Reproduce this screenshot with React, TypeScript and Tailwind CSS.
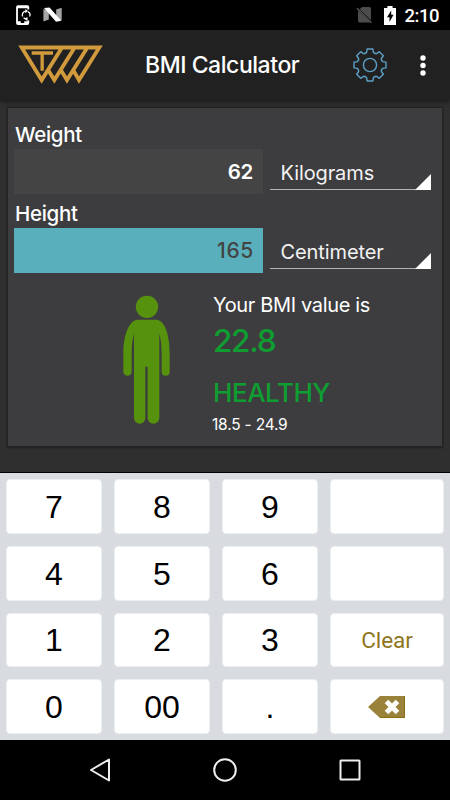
import { useState } from "react";

const KEYS = ["7", "8", "9", "", "4", "5", "6", "", "1", "2", "3", "Clear", "0", "00", ".", "del"];

// Outline of the eight-toothed settings wheel, centred on 0,0
const TOOTH = [
  [-5.4, -11.3],
  [-3.4, -12.6],
  [-2.9, -16],
  [2.9, -16],
  [3.4, -12.6],
  [5.4, -11.3],
];

const gearPoints = Array.from({ length: 8 })
  .flatMap((_, i) => {
    const a = (i * Math.PI) / 4;
    return TOOTH.map(([x, y]) => {
      const px = x * Math.cos(a) - y * Math.sin(a);
      const py = x * Math.sin(a) + y * Math.cos(a);
      return `${px.toFixed(2)},${py.toFixed(2)}`;
    });
  })
  .join(" ");

function StatusBar() {
  return (
    <div className="flex h-[30px] items-center bg-black pl-4 pr-[11px]">
      <svg width="16" height="22" viewBox="0 0 16 22" fill="none" stroke="#fff" className="mt-px">
        <path d="M12.3 4.5V2.2Q12.3 1.2 11.3 1.2H2Q1 1.2 1 2.2V18Q1 19 2 19H11.3Q12.3 19 12.3 18V15.5" strokeWidth="1.8" />
        <path d="M1 2.2H12.3M1 17.4H4.8M8.2 17.4H12.3" strokeWidth="2.2" />
        <path d="M6.6 11.6A4 4 0 0 1 9.6 6.1M12 6.6A4 4 0 0 1 13.6 11.6M11.4 13.9A4 4 0 0 1 7.6 12.8" strokeWidth="1.3" />
        <path d="M9.3 3.9L12.1 6.1L9.3 8.3ZM11.4 11.8V16L8.8 13.9Z" fill="#fff" stroke="none" />
      </svg>
      <svg width="20" height="16" viewBox="0 0 20 16" className="ml-[11px]">
        <path d="M.4 2L5.8 4V12.5L.4 14.5ZM13.2 2.5L18.7 .8V13.2L13.2 12Z" fill="#a5a5a5" />
        <path d="M1 1L6.5 .4L18.4 13.7L13 14.8Z" fill="#fff" />
      </svg>
      <svg width="17" height="18" viewBox="0 0 17 18" className="ml-auto">
        <path d="M6 1H13.5Q15 1 15 2.5V14.2L3.6 3.3ZM2 4.4L14.3 16.5H3.5Q2 16.5 2 15Z" fill="#4c4c4c" />
        <path d="M.8 2L15.4 16.7" stroke="#555" strokeWidth="1.3" />
      </svg>
      <svg width="12" height="19" viewBox="0 0 12 19" className="ml-[11px]">
        <path d="M3.4 0H8.6V2H12V19H0V2H3.4Z" fill="#fff" />
        <path d="M7.2 4.5L3 11.3H5.5V16L9.5 8.8H7.2Z" fill="#000" />
      </svg>
      <span className="ml-[9px] pt-px font-['Roboto',sans-serif] text-[18.5px] font-medium leading-[30px] tracking-[-0.5px] text-white">2:10</span>
    </div>
  );
}

function Header() {
  return (
    <header className="relative flex h-[70px] items-center bg-[#212121] shadow-[0_2px_5px_rgba(0,0,0,0.45)]">
      <svg width="86" height="39" viewBox="56 136 258 117" className="ml-[18px] -mt-px" fill="none" stroke="#d09a3d" strokeWidth="11.5">
        <path d="M188 143.5L127 241L67 143.5H300L239 241L221 210M146 210L165 241L226 143.5M184 210L203 241L264 143.5" strokeMiterlimit="6" />
        <path d="M97 160H161M128.5 158V213" strokeWidth="10" />
      </svg>
      <h1 className="ml-[41px] w-[160px] whitespace-nowrap font-['Inter',sans-serif] text-[23px] font-medium leading-[30px] tracking-[-0.45px] text-white">
        BMI Calculator
      </h1>
      <button className="ml-[46.5px]" aria-label="Settings">
        <svg width="36" height="36" viewBox="-18 -18 36 36" fill="none" stroke="#5c9fc4" strokeWidth="1.4" strokeLinejoin="round">
          <polygon points={gearPoints} />
          <circle r="6.6" />
        </svg>
      </button>
      <button className="ml-[32px]" aria-label="More">
        <svg width="6" height="21" viewBox="0 0 6 21" fill="#fff">
          <circle cx="3" cy="3" r="2.7" />
          <circle cx="3" cy="10.5" r="2.7" />
          <circle cx="3" cy="18" r="2.7" />
        </svg>
      </button>
    </header>
  );
}

type RowProps = {
  label: string;
  unit: string;
  value: string;
  active: boolean;
  onSelect: () => void;
};

function MeasureRow({ label, unit, value, active, onSelect }: RowProps) {
  return (
    <div className="h-[79px]">
      <div className="h-[29px] pl-px pt-[2px] text-[20.5px] font-medium leading-[26px] tracking-[-0.3px] text-white">{label}</div>
      <div className="flex h-[45px]">
        <button
          onClick={onSelect}
          className={
            active
              ? "w-[249px] bg-[#59b0bc] pr-[9px] text-right text-[21px] font-medium tracking-[0.7px] text-[#444]"
              : "w-[249px] bg-[#444] pr-[10px] pt-px text-right text-[20.5px] font-semibold tracking-[-0.3px] text-white"
          }
        >
          {value}
        </button>
        <div className="ml-[7px] flex h-[41px] w-[161px] items-end justify-between border-b-[1.5px] border-[#b4b4b4] pl-[10.5px]">
          <span className="text-[20px] leading-[32px] tracking-[-0.1px] text-[#f2f2f2]">{unit}</span>
          <svg width="16" height="16" viewBox="0 0 16 16" className="-mb-px">
            <path d="M16 0V16H0Z" fill="#fff" />
          </svg>
        </div>
      </div>
    </div>
  );
}

function Person() {
  return (
    <svg width="48" height="130" viewBox="68 46 144 390" fill="#56920d" className="mt-[2px]">
      <circle cx="140" cy="81.5" r="33.5" />
      <path d="M112 120H168C197 122 208 174 208 220V276A12 12 0 0 1 184 276V225C184 198 181 176 177 163V415A17 17 0 0 1 142 415V261H135V415A17 17 0 0 1 101 415V163C97 176 94 198 94 225V276A12.5 12.5 0 0 1 69 276V220C69 174 83 122 112 120Z" />
    </svg>
  );
}

function KeyFace({ name }: { name: string }) {
  if (name === "Clear") {
    return <span className="font-['Roboto',sans-serif] text-[22.5px] tracking-[-0.1px] text-[#8f751d]">Clear</span>;
  }
  if (name === "del") {
    return (
      <svg width="37" height="22" viewBox="0 0 37 22" className="mr-[1.5px]">
        <path d="M0 11L12 0H37V22H12Z" fill="#9b823b" />
        <path d="M36.5 0V21.5H12" stroke="#8a6d14" strokeWidth="1" fill="none" />
        <path d="M18.5 5.5L29.5 16.5M29.5 5.5L18.5 16.5" stroke="#fff" strokeWidth="5" />
      </svg>
    );
  }
  return <>{name}</>;
}

export default function App() {
  const [weight, setWeight] = useState("62");
  const [height, setHeight] = useState("165");
  const [field, setField] = useState("height");

  const bmi = Number(weight) / (Number(height) / 100) ** 2;

  const handleKey = (key: string) => {
    const setValue = field === "height" ? setHeight : setWeight;
    if (!key) return;
    setValue((prev) => {
      if (key === "Clear") return "";
      if (key === "del") return prev.slice(0, -1);
      return prev + key;
    });
  };

  return (
    <div className="flex h-[800px] w-[450px] flex-col overflow-hidden bg-[#2f2f2f] font-['Inter',sans-serif]">
      <StatusBar />
      <Header />

      <main className="mx-[7px] mt-[7px] h-[341px] border border-[#232323] border-b-2 bg-[#3d3d3f] pl-[6px] pt-[12px] shadow-[0_0_2px_rgba(0,0,0,0.3)]">
        <MeasureRow label="Weight" unit="Kilograms" value={weight} active={field === "weight"} onSelect={() => setField("weight")} />
        <MeasureRow label="Height" unit="Centimeter" value={height} active={field === "height"} onSelect={() => setField("height")} />

        <div className="flex pl-[108.5px] pt-[15px]">
          <Person />
          <div className="pl-[42.5px]">
            <p className="text-[20px] leading-[24px] tracking-[-0.35px] text-white">Your BMI value is</p>
            <p className="mt-[4px] text-[31.5px] font-medium leading-[40px] tracking-[-1.3px] text-[#0f9d32]">{bmi ? bmi.toFixed(1) : ""}</p>
            <p className="mt-[15px] text-[26px] font-medium leading-[34px] tracking-[-0.45px] text-[#0f9d32]">HEALTHY</p>
            <p className="-ml-px mt-[5px] text-[15.5px] leading-[20px] tracking-[-0.2px] text-white">18.5 - 24.9</p>
          </div>
        </div>
      </main>

      <div className="mt-auto grid h-[268px] grid-cols-[96px_96px_96px_114px] grid-rows-4 gap-x-3 gap-y-3 border-t border-black bg-[#d8dbe0] pb-[6px] pl-[6px] pt-[6px]">
        {KEYS.map((key, i) => (
          <button
            key={i}
            onClick={() => handleKey(key)}
            className="flex items-center justify-center rounded-[4px] border border-[#eceef0] bg-white pt-px font-['Liberation_Sans',Arial,sans-serif] text-[32px] leading-none text-black"
          >
            <KeyFace name={key} />
          </button>
        ))}
      </div>

      <nav className="flex h-[60px] items-center bg-black pl-[89px]">
        <svg width="22" height="26" viewBox="0 0 22 26" fill="none" stroke="#eee" strokeWidth="2" strokeLinejoin="round">
          <path d="M20 2.5V23.5L2 13Z" />
        </svg>
        <svg width="26" height="26" viewBox="0 0 26 26" fill="none" stroke="#eee" strokeWidth="2" className="ml-[101px]">
          <circle cx="13" cy="13" r="10.8" />
        </svg>
        <svg width="22" height="22" viewBox="0 0 22 22" fill="none" stroke="#eee" strokeWidth="2" strokeLinejoin="round" className="ml-[101px]">
          <rect x="1.5" y="1.5" width="19" height="19" rx=".5" />
        </svg>
      </nav>
    </div>
  );
}
